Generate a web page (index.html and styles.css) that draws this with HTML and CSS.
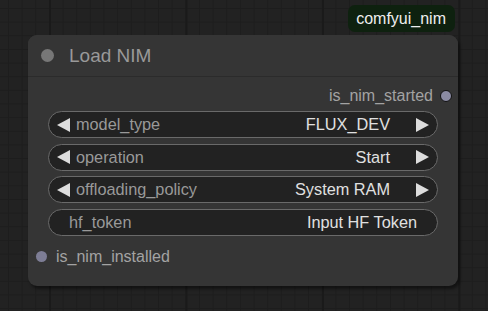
FILE: index.html
```html
<!DOCTYPE html>
<html lang="en">
<head>
    <meta charset="UTF-8">
    <title>Load NIM</title>
    <link rel="stylesheet" href="styles.css">
</head>
<body>
    <div class="canvas">
        <div class="badge-row">
            <span class="badge">comfyui_nim</span>
        </div>
        <div class="node">
            <div class="node-title">
                <span class="title-dot"></span>
                <span class="title-text">Load NIM</span>
            </div>
            <div class="node-body">
                <div class="slot slot-out">
                    <span class="slot-label">is_nim_started</span>
                    <span class="slot-dot out"></span>
                </div>
                <div class="widgets">
                    <div class="widget combo">
                        <span class="arrow left"></span>
                        <span class="w-name">model_type</span>
                        <span class="w-value">FLUX_DEV</span>
                        <span class="arrow right"></span>
                    </div>
                    <div class="widget combo">
                        <span class="arrow left"></span>
                        <span class="w-name">operation</span>
                        <span class="w-value">Start</span>
                        <span class="arrow right"></span>
                    </div>
                    <div class="widget combo">
                        <span class="arrow left"></span>
                        <span class="w-name">offloading_policy</span>
                        <span class="w-value">System RAM</span>
                        <span class="arrow right"></span>
                    </div>
                    <div class="widget text">
                        <span class="w-name">hf_token</span>
                        <span class="w-value">Input HF Token</span>
                    </div>
                </div>
                <div class="slot slot-in">
                    <span class="slot-dot in"></span>
                    <span class="slot-label">is_nim_installed</span>
                </div>
            </div>
        </div>
    </div>
</body>
</html>
```

FILE: styles.css
```css
html, body {
    margin: 0;
    height: 100%;
}
body {
    font-family: "Liberation Sans", Arial, sans-serif;
    background-color: #222;
    background-image:
        linear-gradient(to right, #1a1a1a 2px, transparent 2px),
        linear-gradient(to right, #1d1d1d 1px, transparent 1px),
        linear-gradient(to bottom, #1d1d1d 1px, transparent 1px);
    background-size: 136.5px 136.5px, 13.65px 13.65px, 13.65px 13.65px;
    background-position: 49px 0, 8px 0, 0 8px;
    overflow: hidden;
}
.canvas {
    padding: 5px 0 0 28px;
    width: 430px;
}
.badge-row {
    display: flex;
    justify-content: flex-end;
    padding-right: 3px;
    margin-bottom: 3px;
}
.badge {
    height: 27px;
    line-height: 27px;
    padding: 0 9px 0 8px;
    background: #0e210f;
    color: #eee;
    font-size: 16px;
    border-radius: 7px;
}
.node {
    height: 251px;
    background: #353535;
    border-radius: 9px;
    box-shadow: 2px 3px 3px rgba(0, 0, 0, 0.45);
    overflow: hidden;
}
.node-title {
    height: 41px;
    display: flex;
    align-items: center;
    padding-left: 13px;
    background: #353535;
    border-bottom: 1px solid #2b2b2b;
}
.title-dot {
    width: 13px;
    height: 13px;
    border-radius: 50%;
    background: #777;
}
.title-text {
    margin-left: 15px;
    font-size: 19px;
    color: #999;
}
.node-body {
    padding: 9px 0 0 0;
}
.slot {
    height: 20px;
    display: flex;
    align-items: center;
    font-size: 16px;
    color: #a3a3a3;
}
.slot-out {
    justify-content: flex-end;
    padding-right: 6px;
}
.slot-out .slot-label {
    margin-right: 7px;
}
.slot-in {
    padding-left: 8px;
    margin-top: 11px;
}
.slot-in .slot-label {
    margin-left: 9px;
}
.slot-dot {
    border-radius: 50%;
    background: #8b8ba3;
}
.slot-dot.out {
    width: 10px;
    height: 10px;
    border: 1.5px solid #111;
}
.slot-dot.in {
    width: 11px;
    height: 11px;
    background: #7d7d95;
}
.widgets {
    display: flex;
    flex-direction: column;
    gap: 5.5px;
    padding: 5px 20px 0 20px;
}
.widget {
    height: 25px;
    display: flex;
    align-items: center;
    background: #222;
    border: 1px solid #6a6a6a;
    border-radius: 14px;
    font-size: 16.3px;
    padding: 0 8px;
}
.w-name {
    color: #999;
    flex: 1;
}
.w-value {
    color: #e0e0e0;
}
.combo .w-name {
    margin-left: 6px;
}
.combo .w-value {
    margin-right: 26px;
}
.text .w-name {
    margin-left: 12px;
}
.text .w-value {
    margin-right: 12px;
}
.arrow {
    width: 0;
    height: 0;
    border-top: 7px solid transparent;
    border-bottom: 7px solid transparent;
}
.arrow.left {
    border-right: 13px solid #ddd;
}
.arrow.right {
    border-left: 13px solid #ddd;
}
```
